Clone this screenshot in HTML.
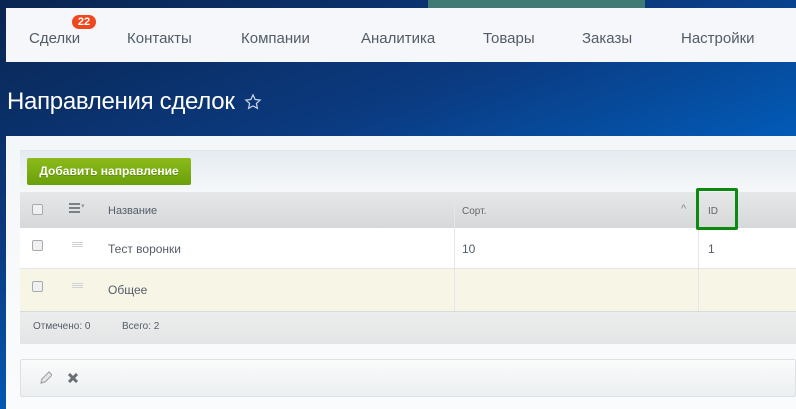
<!DOCTYPE html>
<html><head><meta charset="utf-8"><style>
*{margin:0;padding:0;box-sizing:border-box}
body{width:796px;height:409px;overflow:hidden;position:relative;font-family:"Liberation Sans",Arial,sans-serif;
background:linear-gradient(160deg,#0a2550 0%,#0b3a80 35%,#0060c0 65%,#1a90e0 100%)}
.band{position:absolute;left:428px;top:0;width:217px;height:8px;background:#3f7a74}
.nav{position:absolute;left:6px;top:8px;width:790px;height:54px;background:#f5f7fa}
.nav span{position:absolute;top:22px;font-size:15px;color:#525c69}
.badge{position:absolute;left:66px;top:7px;width:24px;height:14px;border-radius:7px;background:#f0471f;color:#fff;font-size:11px;font-weight:bold;text-align:center;line-height:14px}
h1{position:absolute;left:7px;top:88px;font-weight:normal;font-size:24px;color:#fff;font-family:"Liberation Sans",sans-serif;letter-spacing:-0.3px}
.star{position:absolute;left:244px;top:93px}
.panel{position:absolute;left:6px;top:136px;width:790px;height:273px;background:linear-gradient(#f4f7fa,#fafbfc)}
.tb{position:absolute;left:20px;top:150px;width:776px;height:42px;background:linear-gradient(#e4ebf0,#f6f8fa);border-top:1px solid #e0e6ea}
.btn{position:absolute;left:27px;top:158px;width:164px;height:27px;border-radius:2px;background:linear-gradient(#8cba1a,#6aa00a);color:#fff;font-weight:bold;font-size:12px;line-height:27px;text-align:center;text-shadow:0 1px 0 rgba(0,0,0,.2)}
.th{position:absolute;left:20px;top:192px;width:776px;height:36px;background:linear-gradient(#e6e7e8,#d6d8da)}
.r1{position:absolute;left:20px;top:228px;width:776px;height:41px;background:#fff;border-bottom:1px solid #e4e6e8}
.r2{position:absolute;left:20px;top:269px;width:776px;height:42px;background:#f7f5e6}
.ft{position:absolute;left:20px;top:311px;width:776px;height:33px;background:linear-gradient(#eceded,#e4e5e6);border-top:1px solid #d8dadc}
.ab{position:absolute;left:20px;top:359px;width:776px;height:38px;background:linear-gradient(#fafbfb,#eceff1);border:1px solid #dde1e4;border-radius:2px}
.cb{position:absolute;left:32px;width:11px;height:11px;border:1px solid #a8acb0;border-radius:2px;background:#f0f0f0}
.t{position:absolute;font-size:12px;color:#535c69}
.s{position:absolute;font-size:11px;color:#535c69}
.vl{position:absolute;width:1px;background:#e4e6e8}
.ham{position:absolute;left:72px;width:11px}
.ham i{display:block;height:1px;background:#a8acb0;margin-bottom:1px;border-bottom:1px solid #d0d3d6}
</style></head><body>
<div class="band"></div>
<div class="nav">
<span style="left:23px">Сделки</span><div class="badge">22</div>
<span style="left:121px">Контакты</span>
<span style="left:235px">Компании</span>
<span style="left:355px">Аналитика</span>
<span style="left:477px">Товары</span>
<span style="left:576px">Заказы</span>
<span style="left:675px">Настройки</span>
</div>
<h1>Направления сделок</h1>
<svg class="star" width="18" height="18" viewBox="0 0 24 24"><path d="M12 2.5l2.9 6.2 6.6.7-5 4.5 1.4 6.6L12 17.2l-5.9 3.3 1.4-6.6-5-4.5 6.6-.7z" fill="none" stroke="#cfd8e8" stroke-width="1.6"/></svg>
<div class="panel"></div>
<div class="tb"></div>
<div class="btn">Добавить направление</div>
<div class="th"></div>
<div class="r1"></div>
<div class="r2"></div>
<div class="ft"></div>
<div class="vl" style="left:454px;top:192px;height:119px"></div>
<div class="vl" style="left:698px;top:192px;height:119px"></div>
<div class="cb" style="top:204px"></div>
<div style="position:absolute;left:69px;top:203px;width:11px">
<div style="height:2px;background:#7a8086;margin-bottom:2px"></div><div style="height:2px;background:#7a8086;margin-bottom:2px"></div><div style="height:2px;background:#7a8086"></div></div>
<span style="position:absolute;left:81px;top:202px;font-size:7px;color:#999">▾</span>
<div class="t" style="left:108px;top:205px;font-size:11px">Название</div>
<div class="s" style="left:462px;top:206px;font-size:10px;color:#666">Сорт.</div>
<div class="s" style="left:681px;top:203px;color:#888">^</div>
<div class="s" style="left:708px;top:206px;font-size:10px;color:#666">ID</div>
<div style="position:absolute;left:696px;top:188px;width:42px;height:42px;border:3px solid #0c8a10;border-radius:2px"></div>
<div class="cb" style="top:240px"></div>
<div class="ham" style="top:242px"><i></i><i></i><i></i></div>
<div class="t" style="left:108px;top:242px">Тест воронки</div>
<div class="t" style="left:462px;top:242px">10</div>
<div class="t" style="left:708px;top:242px">1</div>
<div class="cb" style="top:281px"></div>
<div class="ham" style="top:283px"><i></i><i></i><i></i></div>
<div class="t" style="left:108px;top:283px">Общее</div>
<div class="s" style="left:33px;top:321px;font-size:10px">Отмечено: 0</div>
<div class="s" style="left:122px;top:321px;font-size:10px">Всего: 2</div>
<div class="ab"></div>
<svg style="position:absolute;left:38px;top:370px" width="14" height="16" viewBox="0 0 14 16"><path d="M3 13l1-4 7-7 3 3-7 7z" fill="#e8e8e8" stroke="#a0a4a8" stroke-width="1.2"/></svg>
<svg style="position:absolute;left:67px;top:372px" width="12" height="12" viewBox="0 0 12 12"><path d="M2 2l8 8M10 2l-8 8" stroke="#6a6e72" stroke-width="3"/></svg>
</body></html>
